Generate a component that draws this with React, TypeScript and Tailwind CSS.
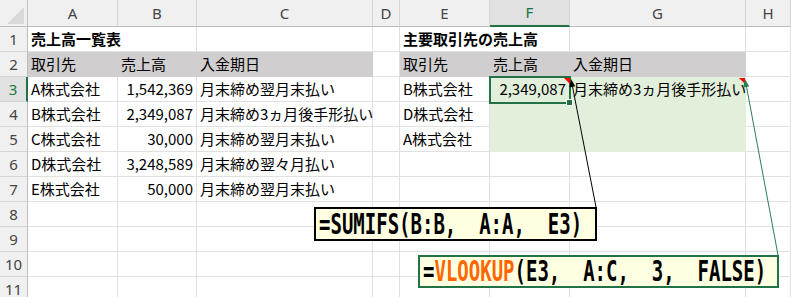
import React from 'react';

type Cell = { t?: string; r?: boolean; b?: boolean; f?: 'g' | 'e'; o?: boolean };

const cols = ['A', 'B', 'C', 'D', 'E', 'F', 'G', 'H'];

const rows: Cell[][] = [
  [{ t: '売上高一覧表', b: true, o: true }, {}, {}, {}, { t: '主要取引先の売上高', b: true, o: true }, {}, {}, {}],
  [
    { t: '取引先', f: 'g' },
    { t: '売上高', f: 'g' },
    { t: '入金期日', f: 'g' },
    {},
    { t: '取引先', f: 'g' },
    { t: '売上高', f: 'g' },
    { t: '入金期日', f: 'g' },
    {},
  ],
  [
    { t: 'A株式会社' },
    { t: '1,542,369', r: true },
    { t: '月末締め翌月末払い' },
    {},
    { t: 'B株式会社' },
    { t: '2,349,087', r: true, f: 'e' },
    { t: '月末締め3ヵ月後手形払い', f: 'e' },
    {},
  ],
  [
    { t: 'B株式会社' },
    { t: '2,349,087', r: true },
    { t: '月末締め3ヵ月後手形払い' },
    {},
    { t: 'D株式会社' },
    { f: 'e' },
    { f: 'e' },
    {},
  ],
  [
    { t: 'C株式会社' },
    { t: '30,000', r: true },
    { t: '月末締め翌月末払い' },
    {},
    { t: 'A株式会社' },
    { f: 'e' },
    { f: 'e' },
    {},
  ],
  [{ t: 'D株式会社' }, { t: '3,248,589', r: true }, { t: '月末締め翌々月払い' }, {}, {}, {}, {}, {}],
  [{ t: 'E株式会社' }, { t: '50,000', r: true }, { t: '月末締め翌月末払い' }, {}, {}, {}, {}, {}],
  [{}, {}, {}, {}, {}, {}, {}, {}],
  [{}, {}, {}, {}, {}, {}, {}, {}],
  [{}, {}, {}, {}, {}, {}, {}, {}],
  [{}, {}, {}, {}, {}, {}, {}, {}],
];

function SheetCell({ t, r, b, f, o }: Cell) {
  let cls = 'flex items-center whitespace-nowrap px-[3px] border-r border-b ';
  if (f === 'g') cls += 'bg-[#d0cece] border-r-[#d0cece] border-b-[#d0cece] ';
  else if (f === 'e') cls += 'bg-[#e2efda] border-r-[#e2efda] border-b-[#e2efda] ';
  else if (o) cls += 'border-r-transparent border-b-[#e1e1e1] ';
  else cls += 'border-r-[#e1e1e1] border-b-[#e1e1e1] ';
  if (r) cls += 'justify-end ';
  if (b) cls += 'font-bold ';
  return <div className={cls}>{t}</div>;
}

export default function App() {
  return (
    <div className="relative w-[791px] h-[297px] overflow-hidden bg-white font-['Noto_Sans_CJK_JP',sans-serif] text-[15px] text-black">
      <div className="grid grid-cols-[28px_90px_79px_176px_27px_90px_80px_176px_1fr] grid-rows-[27px_repeat(11,25px)]">
        {/* corner */}
        <div className="relative border-r border-b border-r-[#bdbdbd] border-b-[#bdbdbd] bg-[#f0f0f0]">
          <svg className="absolute left-[7px] top-[7px]" width="17" height="17">
            <path d="M17 0V17H0Z" fill="#dadada" />
          </svg>
        </div>
        {cols.map((c) =>
          c === 'F' ? (
            <div
              key={c}
              className="flex items-center justify-center bg-[#e1e1e1] border-r border-r-[#d4d4d4] border-b-2 border-b-[#217346] font-['Noto_Sans',sans-serif] text-[#217346]"
            >
              {c}
            </div>
          ) : (
            <div
              key={c}
              className="flex items-center justify-center bg-[#f0f0f0] border-r border-b border-r-[#d4d4d4] border-b-[#bdbdbd] font-['Noto_Sans',sans-serif] text-[#444]"
            >
              {c}
            </div>
          )
        )}
        {rows.map((row, i) => (
          <React.Fragment key={i}>
            {i === 2 ? (
              <div className="flex items-center justify-center bg-[#e1e1e1] border-r-2 border-b border-r-[#217346] border-b-[#d4d4d4] font-['Noto_Sans',sans-serif] text-[#217346]">
                {i + 1}
              </div>
            ) : (
              <div className="flex items-center justify-center bg-[#f0f0f0] border-r border-b border-r-[#bdbdbd] border-b-[#d4d4d4] font-['Noto_Sans',sans-serif] text-[#444]">
                {i + 1}
              </div>
            )}
            {row.map((cell, j) => (
              <SheetCell key={j} {...cell} />
            ))}
          </React.Fragment>
        ))}
      </div>

      {/* selected cell F3 */}
      <div className="absolute left-[489px] top-[76px] w-[82px] h-[28px] border-2 border-[#217346]" />
      <div className="absolute left-[566px] top-[99px] w-[7px] h-[7px] bg-[#217346] border border-white" />

      {/* comment indicators and arrows */}
      <svg className="absolute inset-0 pointer-events-none" width="791" height="297" viewBox="0 0 791 297">
        <path d="M564 78H570V84Z" fill="#ff0000" />
        <path d="M739 78H745V84Z" fill="#ff0000" />
        <line x1="596" y1="207" x2="572" y2="84" stroke="#000" strokeWidth="1" />
        <path d="M571 79L575.3 86.3L569.4 87.4Z" fill="#000" />
        <line x1="778" y1="255" x2="746" y2="84" stroke="#2e7d52" strokeWidth="1" />
        <path d="M745 79L749.2 86.4L743.3 87.4Z" fill="#2e7d52" />
      </svg>

      {/* formula notes */}
      <div className="absolute left-[314px] top-[207px] w-[283px] h-[34px] flex items-center pl-[3px] bg-[#ffffe1] border-2 border-black">
        <span className="inline-block scale-y-[1.45] whitespace-pre leading-none font-['DejaVu_Sans_Mono',monospace] font-bold text-[19px] text-black">
          =SUMIFS(B:B,  A:A,  E3)
        </span>
      </div>
      <div className="absolute left-[418px] top-[255px] w-[361px] h-[33px] flex items-center pl-[3px] bg-[#ffffe1] border-2 border-[#217346]">
        <span className="inline-block scale-y-[1.45] whitespace-pre leading-none font-['DejaVu_Sans_Mono',monospace] font-bold text-[19px] text-black">
          =<span className="text-[#ff6600]">VLOOKUP</span>(E3,  A:C,  3,  FALSE)
        </span>
      </div>
    </div>
  );
}
